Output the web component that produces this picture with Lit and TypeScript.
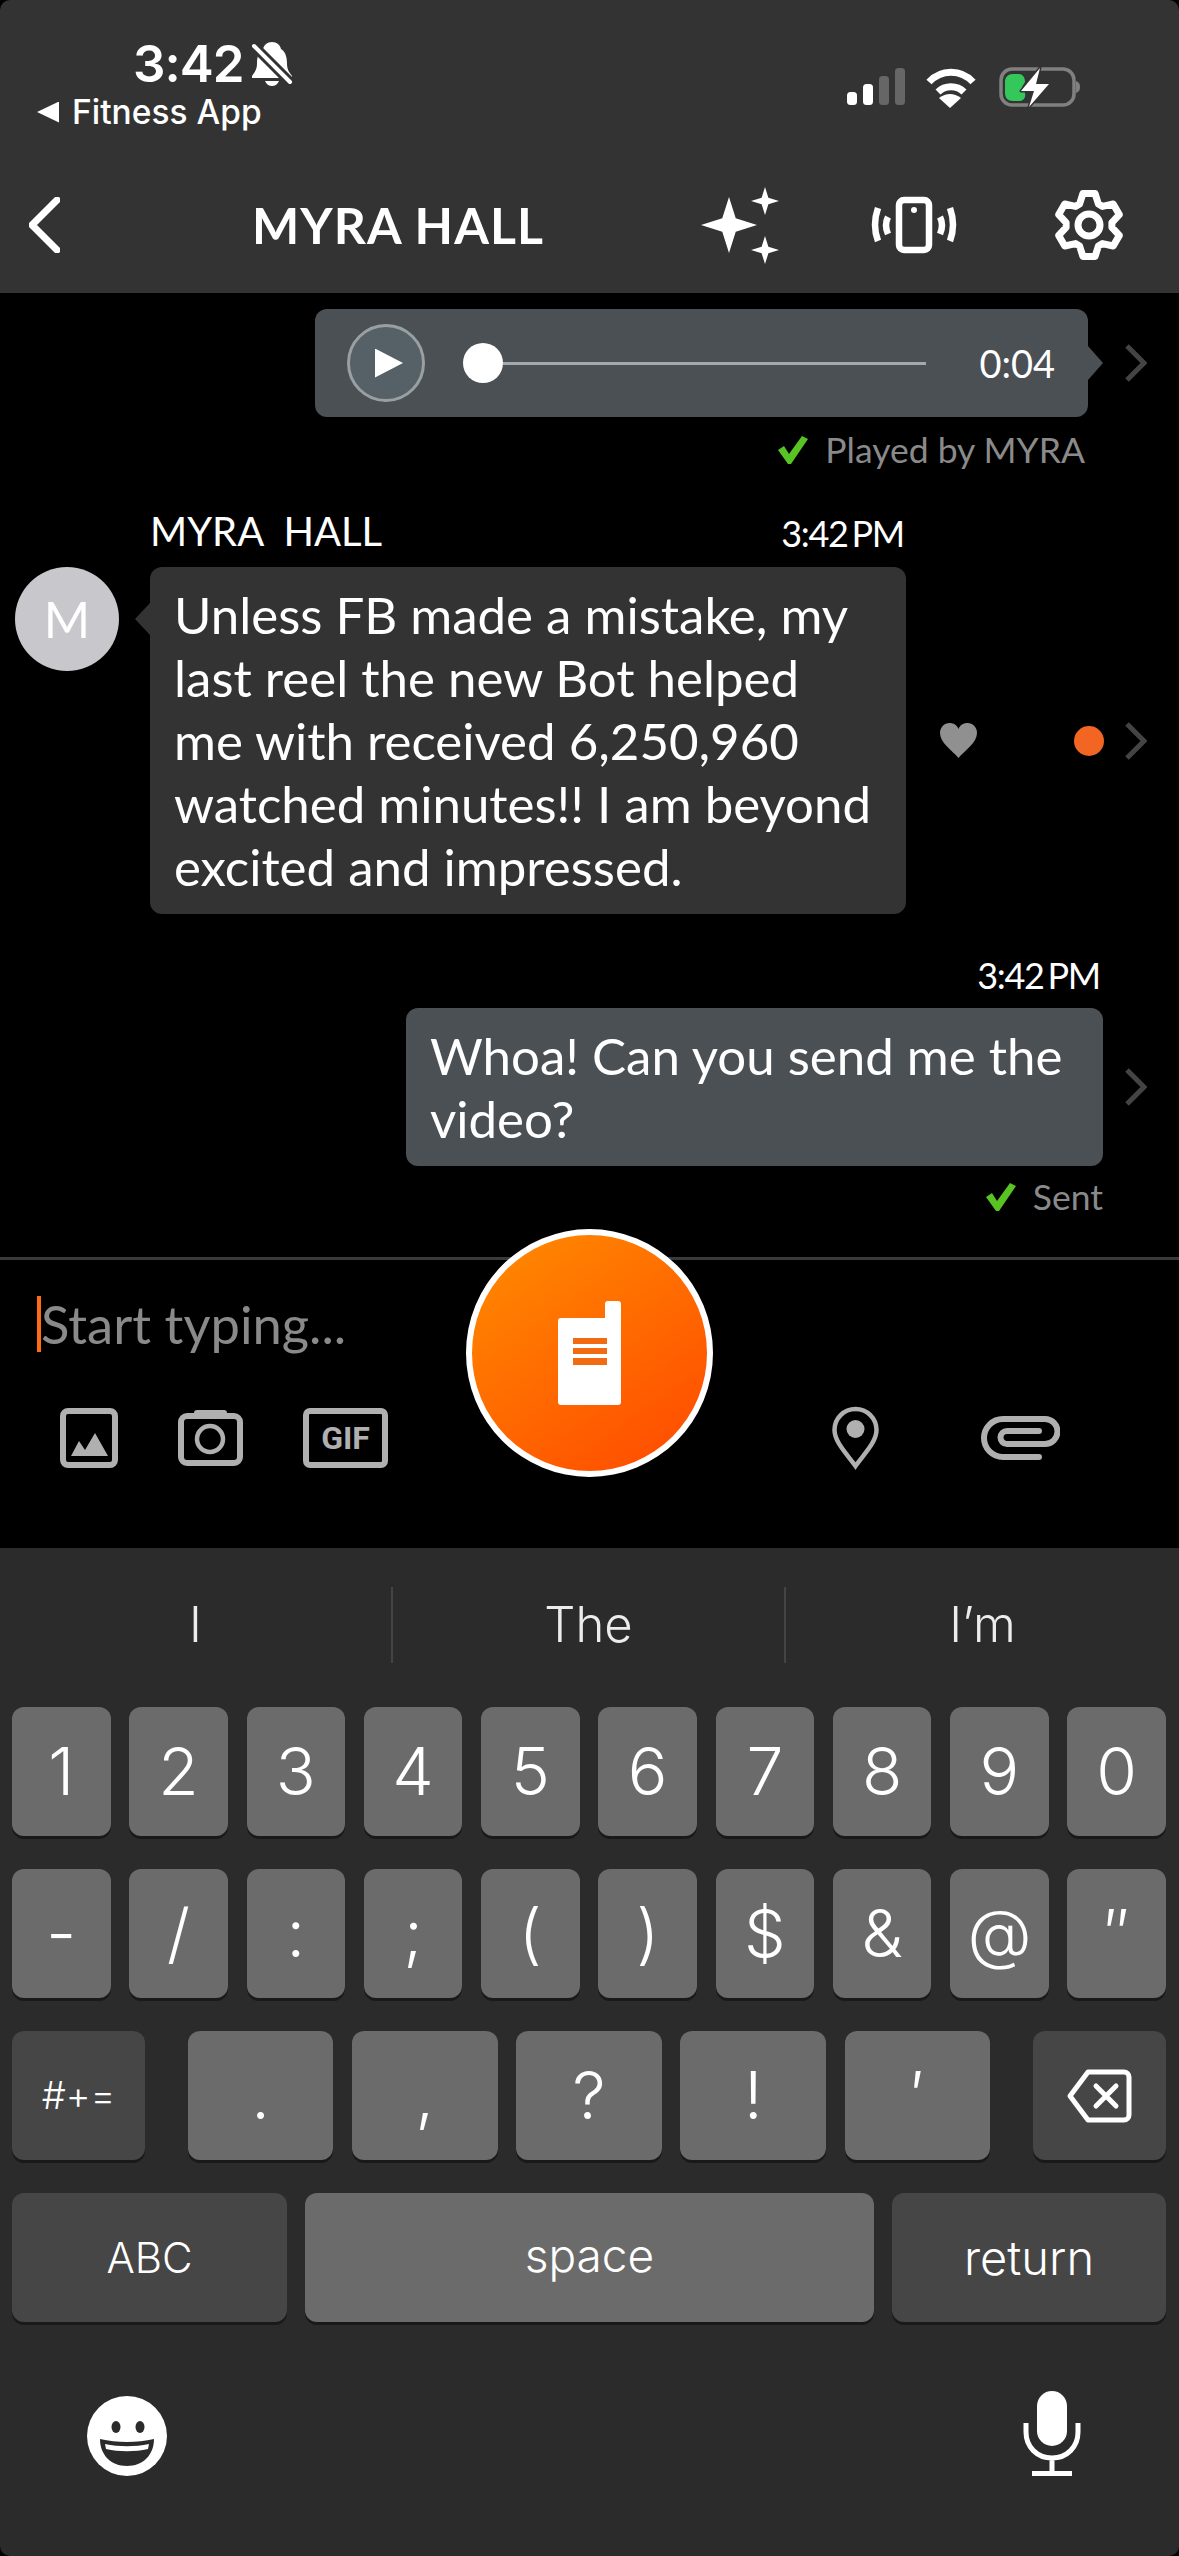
import { LitElement, css, html, svg } from 'lit';
import { customElement } from 'lit/decorators.js';

const ROW_ONE = ['1', '2', '3', '4', '5', '6', '7', '8', '9', '0'];
const ROW_TWO = ['-', '/', ':', ';', '(', ')', '$', '&', '@', '″'];
const ROW_THREE = ['.', ',', '?', '!', '′'];

// six toothed outline, centred on 38,38
function gearPath() {
  const pts: string[] = [];
  for (let i = 0; i < 6; i++) {
    const a = -90 + i * 60;
    for (const [r, d] of [[23, -24], [32, -11], [32, 11], [23, 24]]) {
      const t = ((a + d) * Math.PI) / 180;
      pts.push(`${(38 + r * Math.cos(t)).toFixed(1)} ${(38 + r * Math.sin(t)).toFixed(1)}`);
    }
  }
  return `M${pts.join('L')}Z`;
}

function star(cx: number, cy: number, r: number) {
  const k = r * 0.24;
  return `M${cx} ${cy - r}L${cx + k} ${cy - k}L${cx + r} ${cy}L${cx + k} ${cy + k}L${cx} ${cy + r}L${cx - k} ${cy + k}L${cx - r} ${cy}L${cx - k} ${cy - k}Z`;
}

const chevron = html`<svg class="chev" width="23" height="38" viewBox="0 0 23 38" fill="none">
  <path d="M3 2l17 17L3 36" stroke="#444" stroke-width="5" />
</svg>`;

const tick = html`<svg class="tick" width="30" height="28" viewBox="0 0 30 28">
  <path d="M0 14l6-4 5 8L24 0l6 3-17 25h-3z" fill="#58c322" />
</svg>`;

@customElement('app-root')
export class AppRoot extends LitElement {
  static styles = css`
    :host {
      display: block;
      background: #000;
      font-family: 'Lato', 'Liberation Sans', sans-serif;
      color: #fff;
    }

    svg {
      display: block;
      flex: none;
    }

    .screen {
      width: 1179px;
      height: 2556px;
      overflow: hidden;
      border-radius: 10px;
      background: #000;
      display: flex;
      flex-direction: column;
    }

    /* header */
    .header {
      height: 293px;
      background: #333;
      flex: none;
    }

    .status {
      height: 183px;
      padding: 38px 98px 0 37px;
      box-sizing: border-box;
      display: flex;
      justify-content: space-between;
      align-items: flex-start;
      font-family: 'Inter', 'Liberation Sans', sans-serif;
    }

    .clock {
      display: flex;
      align-items: center;
      height: 52px;
      margin-left: 96px;
      font-size: 51px;
      font-weight: 600;
      line-height: 52px;
      letter-spacing: -1px;
      gap: 4px;
    }

    .back-app {
      display: flex;
      align-items: center;
      gap: 13px;
      margin-top: 3px;
      font-size: 33.500px;
      font-weight: 500;
      line-height: 38px;
    }

    .back-arrow {
      width: 22px;
      height: 21px;
      background: #fff;
      clip-path: polygon(100% 0, 100% 100%, 0 50%);
    }

    .status-icons {
      display: flex;
      align-items: flex-start;
      margin-top: 28px;
    }

    .signal {
      margin-top: 1px;
    }

    .wifi {
      margin-left: 18px;
    }

    .battery {
      margin-left: 21px;
    }

    .nav {
      display: flex;
      align-items: center;
      height: 84px;
      padding: 0 52px 0 29px;
    }

    .title {
      margin-left: 192px;
      font-size: 50px;
      font-weight: 700;
      letter-spacing: 1.100px;
      line-height: 84px;
      flex: 1;
    }

    .phone {
      margin: 0 92px 0 86px;
    }

    /* chat */
    .chat {
      height: 964px;
      flex: none;
      overflow: hidden;
    }

    .row {
      display: flex;
      align-items: center;
      justify-content: flex-end;
      padding-right: 32px;
    }

    .audio-row {
      margin-top: 16px;
    }

    .bubble {
      position: relative;
      box-sizing: border-box;
      border-radius: 12px;
      font-size: 51px;
      line-height: 63px;
      padding: 16px 24px;
    }

    .audio {
      width: 773px;
      height: 108px;
      padding: 0 33px 0 32px;
      background: #4a5054;
      display: flex;
      align-items: center;
    }

    .audio::after {
      content: '';
      position: absolute;
      right: -15px;
      top: 37px;
      width: 15px;
      height: 34px;
      background: #4a5054;
      clip-path: polygon(0 0, 100% 50%, 0 100%);
    }

    .play {
      width: 78px;
      height: 78px;
      box-sizing: border-box;
      flex: none;
      border: 3px solid #9a9fa2;
      border-radius: 50%;
      background: #566067;
      display: flex;
      align-items: center;
      justify-content: center;
      margin-right: 38px;
    }

    .play i {
      width: 28px;
      height: 29px;
      margin-left: 6px;
      background: #fff;
      clip-path: polygon(0 0, 100% 50%, 0 100%);
    }

    .slider {
      display: flex;
      align-items: center;
      flex: 1;
    }

    .knob {
      width: 40px;
      height: 40px;
      flex: none;
      border-radius: 50%;
      background: #fff;
    }

    .line {
      height: 3px;
      flex: 1;
      background: #a5a8aa;
    }

    .dur {
      margin-left: 53px;
      font-size: 38px;
      line-height: 44px;
    }

    .gap-36 {
      margin-left: 36px;
    }

    .gap-21 {
      margin-left: 21px;
    }

    .note {
      display: flex;
      align-items: center;
      justify-content: flex-end;
      gap: 17px;
      font-size: 35.500px;
      line-height: 34px;
      color: #8a8a8a;
    }

    .played {
      margin-top: 16px;
      padding-right: 94px;
    }

    .sent {
      margin-top: 14px;
      padding-right: 76px;
    }

    .meta {
      display: flex;
      justify-content: space-between;
      width: 754px;
      margin: 41px 0 11px 150px;
      font-size: 40px;
      line-height: 46px;
      white-space: pre;
    }

    .time {
      font-size: 36px;
      letter-spacing: -1.300px;
      word-spacing: -4px;
      padding-top: 2px;
    }

    .incoming {
      display: flex;
      align-items: center;
      padding-left: 15px;
    }

    .avatar {
      align-self: flex-start;
      width: 104px;
      height: 104px;
      flex: none;
      border-radius: 50%;
      background: #c7c7cc;
      font-size: 50px;
      line-height: 104px;
      text-align: center;
    }

    .from {
      width: 756px;
      margin-left: 31px;
      background: #333;
    }

    .from::before {
      content: '';
      position: absolute;
      left: -15px;
      top: 36px;
      width: 15px;
      height: 32px;
      background: #333;
      clip-path: polygon(100% 0, 100% 100%, 0 50%);
    }

    .heart {
      margin-left: 34px;
    }

    .dot {
      width: 30px;
      height: 30px;
      flex: none;
      margin: 0 20px 0 97px;
      border-radius: 50%;
      background: #f26522;
    }

    .my-time {
      margin-top: 36px;
      padding-right: 79px;
      text-align: right;
      line-height: 46px;
      margin-bottom: 10px;
    }

    .mine {
      width: 697px;
      background: #4a5054;
    }

    /* composer */
    .composer {
      position: relative;
      height: 291px;
      flex: none;
      box-sizing: border-box;
      border-top: 3px solid #3a3a3a;
      padding-top: 36px;
    }

    .input {
      display: flex;
      height: 56px;
      margin-left: 37px;
      font-size: 52.500px;
      line-height: 56px;
      color: #8a8a8a;
    }

    .caret {
      width: 4px;
      height: 56px;
      background: #ff6a13;
    }

    .tools {
      display: flex;
      justify-content: space-between;
      align-items: center;
      margin-top: 54px;
      padding: 0 119px 0 60px;
    }

    .tool-group {
      display: flex;
      align-items: center;
    }

    .left {
      gap: 60px;
    }

    .right {
      gap: 100px;
    }

    .gif {
      width: 85px;
      height: 60px;
      box-sizing: border-box;
      border: 6px solid #b0b0b0;
      border-radius: 7px;
      font-family: 'Roboto', sans-serif;
      font-size: 32px;
      font-weight: 700;
      line-height: 48px;
      text-align: center;
      color: #b0b0b0;
    }

    .ptt {
      position: absolute;
      left: 466px;
      top: -31px;
      width: 247px;
      height: 248px;
      box-sizing: border-box;
      border: 6px solid #fff;
      border-radius: 50%;
      background: linear-gradient(145deg, #ff8c00, #ff4800);
      display: flex;
      align-items: center;
      justify-content: center;
    }

    /* keyboard */
    .keyboard {
      flex: 1;
      background: #2b2b2b;
      padding: 39px 13px 0 12px;
      font-family: 'Inter', 'Liberation Sans', sans-serif;
      font-weight: 300;
    }

    .suggest {
      display: grid;
      grid-template-columns: 391px 393px 395px;
      height: 74px;
      margin: 0 -13px 46px -12px;
    }

    .suggest span {
      font-size: 49px;
      line-height: 76px;
      text-align: center;
      color: #ececec;
      border-left: 2px solid #444;
    }

    .suggest span:first-child {
      border-left: 0;
    }

    .keys {
      display: grid;
      grid-template-columns: repeat(10, 1fr);
      column-gap: 18.7px;
      margin-bottom: 33px;
    }

    .key {
      height: 129px;
      border-radius: 12px;
      background: #6b6b6b;
      box-shadow: 0 3px 0 #191919;
      font-size: 66px;
      line-height: 129px;
      text-align: center;
    }

    .fn {
      background: #464646;
    }

    .keys-mid {
      grid-template-columns: 157px repeat(5, 1fr) 157px;
    }

    .hash {
      width: 133px;
      font-size: 38px;
    }

    .erase {
      width: 133px;
      margin-left: auto;
      display: flex;
      align-items: center;
      justify-content: center;
    }

    .keys-last {
      grid-template-columns: 275px 1fr 274px;
      column-gap: 18px;
      margin-bottom: 0;
    }

    .abc {
      font-size: 42px;
    }

    .return {
      font-size: 47px;
    }

    .space {
      line-height: 124px;
      font-size: 46px;
    }

    .bottom {
      display: flex;
      justify-content: space-between;
      align-items: flex-end;
      margin-top: 69px;
      padding: 0 85px 0 75px;
    }
  `;

  render() {
    return html`
      <div class="screen">
        ${this.renderHeader()}
        <div class="chat">
          <div class="row audio-row">
            <div class="bubble audio">
              <div class="play"><i></i></div>
              <div class="slider">
                <div class="knob"></div>
                <div class="line"></div>
              </div>
              <div class="dur">0:04</div>
            </div>
            <div class="gap-36">${chevron}</div>
          </div>
          <div class="note played">${tick}<span>Played by MYRA</span></div>

          <div class="meta"><span>MYRA  HALL</span><span class="time">3:42 PM</span></div>
          <div class="incoming">
            <div class="avatar">M</div>
            <div class="bubble from">
              Unless FB made a mistake, my<br />
              last reel the new Bot helped<br />
              me with received 6,250,960<br />
              watched minutes!! I am beyond<br />
              excited and impressed.
            </div>
            <svg class="heart" width="37" height="35" viewBox="0 0 37 35">
              <path d="M18.5 35C12 27 0 20 0 10 0 4 4.500 0 9.500 0c4 0 7.500 2 9 6 1.500-4 5-6 9-6C32.500 0 37 4 37 10c0 10-12 17-18.500 25z" fill="#909090" />
            </svg>
            <div class="dot"></div>
            ${chevron}
          </div>

          <div class="time my-time">3:42 PM</div>
          <div class="row">
            <div class="bubble mine">Whoa! Can you send me the<br />video?</div>
            <div class="gap-21">${chevron}</div>
          </div>
          <div class="note sent">${tick}<span>Sent</span></div>
        </div>
        ${this.renderComposer()} ${this.renderKeyboard()}
      </div>
    `;
  }

  renderHeader() {
    return html`
      <div class="header">
        <div class="status">
          <div>
            <div class="clock">
              3:42
              <svg width="50" height="50" viewBox="0 0 50 50">
                <path d="M25 3c5 0 8 3 9 7 5 3 6 9 6 15 0 6 3 9 5 12v2H5v-2c2-3 5-6 5-12 0-6 1-12 6-15 1-4 4-7 9-7zM18 42h14c-1 3-4 5-7 5s-6-2-7-5z" fill="#fff" />
                <path d="M6 6l38 38" stroke="#333" stroke-width="10" />
                <path d="M7 7l36 36" stroke="#fff" stroke-width="4" stroke-linecap="round" />
              </svg>
            </div>
            <div class="back-app"><i class="back-arrow"></i><span>Fitness App</span></div>
          </div>
          <div class="status-icons">
            <svg class="signal" width="59" height="40" viewBox="0 0 59 40">
              <rect x="0" y="25" width="10" height="13" rx="3.500" fill="#fff" />
              <rect x="16" y="17" width="10" height="21" rx="3.500" fill="#fff" />
              <rect x="32" y="9" width="10" height="29" rx="3.500" fill="#666" />
              <rect x="48" y="1" width="10" height="37" rx="3.500" fill="#666" />
            </svg>
            <svg class="wifi" width="54" height="42" viewBox="0 0 54 42">
              <path d="M5 16C17 3 37 3 49 16" fill="none" stroke="#fff" stroke-width="7" />
              <path d="M14 26c7-7 19-7 26 0" fill="none" stroke="#fff" stroke-width="7" />
              <path d="M15 32Q26 24 37 32L26 42Z" fill="#fff" />
            </svg>
            <svg class="battery" width="82" height="42" viewBox="0 0 82 42">
              <rect x="2" y="3" width="73" height="36" rx="11" fill="none" stroke="#808080" stroke-width="3.500" />
              <path d="M77 15c3 1 4 3 4 6s-1 5-4 6z" fill="#808080" />
              <path d="M6 16c0-5 3-8 8-8h6c4 0 6 4 6 8l-3 5 3 6c1 4-1 8-6 8h-6c-5 0-8-3-8-8z" fill="#34c759" />
              <path d="M41 2L22 25H35L30 41 50 18H37z" fill="#fff" stroke="#333" stroke-width="3" stroke-linejoin="round" paint-order="stroke" />
            </svg>
          </div>
        </div>
        <div class="nav">
          <svg width="31" height="56" viewBox="0 0 31 56" fill="none">
            <path d="M28 3L3 28l25 25" stroke="#fff" stroke-width="7" stroke-linecap="round" stroke-linejoin="round" />
          </svg>
          <div class="title">MYRA HALL</div>
          <svg width="84" height="83" viewBox="0 0 84 83">
            <path d="${star(30, 41, 28)}${star(66, 17, 14)}${star(66, 66, 14)}" fill="#fff" />
          </svg>
          <svg class="phone" width="90" height="62" viewBox="0 0 90 62" fill="none" stroke="#fff" stroke-width="6.500">
            <rect x="30" y="6" width="30" height="50" rx="5" />
            <circle cx="45" cy="16" r="3" fill="#fff" stroke="none" />
            <path d="M9 14Q3 31 9 47M19 23Q15 31 19 40M81 14Q87 31 81 47M71 23Q75 31 71 40" />
          </svg>
          <svg width="76" height="76" viewBox="0 0 76 76" fill="none" stroke="#fff" stroke-width="7" stroke-linejoin="round">
            ${svg`<path d="${gearPath()}" />`}
            <circle cx="38" cy="38" r="11" />
          </svg>
        </div>
      </div>
    `;
  }

  renderComposer() {
    return html`
      <div class="composer">
        <div class="input"><i class="caret"></i><span>Start typing...</span></div>
        <div class="tools">
          <div class="tool-group left">
            <svg width="58" height="60" viewBox="0 0 58 60">
              <rect x="3" y="3" width="52" height="54" rx="5" fill="none" stroke="#b0b0b0" stroke-width="6" />
              <path d="M11 48l8-15 6 9 10-17 13 23z" fill="#b0b0b0" />
            </svg>
            <svg width="65" height="56" viewBox="0 0 65 56">
              <path d="M16 5V3a3 3 0 013-3h27a3 3 0 013 3v2z" fill="#b0b0b0" />
              <rect x="3" y="6" width="59" height="47" rx="6" fill="none" stroke="#b0b0b0" stroke-width="6" />
              <circle cx="32" cy="29" r="13" fill="none" stroke="#b0b0b0" stroke-width="4.500" />
            </svg>
            <div class="gif">GIF</div>
          </div>
          <div class="tool-group right">
            <svg width="47" height="64" viewBox="0 0 47 64">
              <path d="M23.500 60C15 48 2.500 36 2.500 24a21 21 0 0142 0c0 12-12.500 24-21 36z" fill="none" stroke="#b0b0b0" stroke-width="4.500" />
              <circle cx="23.500" cy="23" r="9" fill="#b0b0b0" />
            </svg>
            <svg width="81" height="45" viewBox="6 6 81 45" fill="none">
              <path d="M66 21H34A6.500 6.500 0 0034 34H72A12.500 12.500 0 0072 9H30A19 19 0 0030 47H66" stroke="#b0b0b0" stroke-width="6" stroke-linecap="round" />
            </svg>
          </div>
        </div>
        <div class="ptt">
          <svg width="63" height="104" viewBox="0 0 63 104">
            <path d="M47 3a3 3 0 013-3h10a3 3 0 013 3v98a3 3 0 01-3 3H3a3 3 0 01-3-3V20a3 3 0 013-3h44z" fill="#fff" />
            <path d="M15 37h34v6H15zM15 47h34v6H15zM15 57h34v7H15z" fill="#f26a12" />
          </svg>
        </div>
      </div>
    `;
  }

  renderKeyboard() {
    return html`
      <div class="keyboard">
        <div class="suggest"><span>I</span><span>The</span><span>I’m</span></div>
        <div class="keys">${ROW_ONE.map(k => html`<div class="key">${k}</div>`)}</div>
        <div class="keys">${ROW_TWO.map(k => html`<div class="key">${k}</div>`)}</div>
        <div class="keys keys-mid">
          <div class="key fn hash">#+=</div>
          ${ROW_THREE.map(k => html`<div class="key">${k}</div>`)}
          <div class="key fn erase">
            <svg width="66" height="54" viewBox="0 0 66 54" fill="none" stroke="#fff" stroke-width="5" stroke-linejoin="round">
              <path d="M22 3H58a5 5 0 015 5V46a5 5 0 01-5 5H22L4 27z" />
              <path d="M30 17l20 20M50 17L30 37" stroke-linecap="round" />
            </svg>
          </div>
        </div>
        <div class="keys keys-last">
          <div class="key fn abc">ABC</div>
          <div class="key space">space</div>
          <div class="key fn return">return</div>
        </div>
        <div class="bottom">
          <svg width="80" height="80" viewBox="0 0 80 80">
            <circle cx="40" cy="40" r="40" fill="#fff" />
            <ellipse cx="29" cy="31" rx="4.500" ry="6" fill="#2b2b2b" />
            <ellipse cx="53" cy="31" rx="4.500" ry="6" fill="#2b2b2b" />
            <path d="M13 43c17 4 37 4 54 0 0 16-11 27-27 27S13 59 13 43z" fill="#2b2b2b" />
            <path d="M18 48c14 3 30 3 44 0l-1 5c-13 3-29 3-42 0z" fill="#fff" />
          </svg>
          <svg width="58" height="85" viewBox="0 0 58 85" fill="none">
            <rect x="14" y="0" width="30" height="55" rx="15" fill="#fff" />
            <path d="M3 32v9c0 15 11 26 26 26s26-11 26-26v-9M29 67v15" stroke="#fff" stroke-width="5" />
            <path d="M9 80h40v5H9z" fill="#fff" />
          </svg>
        </div>
      </div>
    `;
  }
}
